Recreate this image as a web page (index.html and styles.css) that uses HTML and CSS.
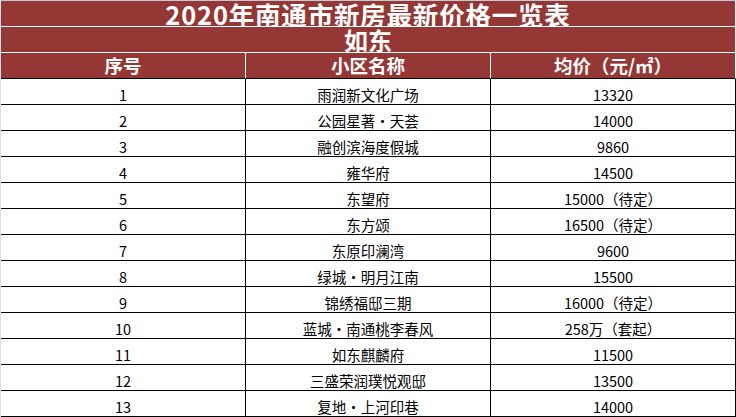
FILE: index.html
```html
<!DOCTYPE html>
<html lang="zh">
<head>
<meta charset="utf-8">
<title>2020年南通市新房最新价格一览表</title>
<link rel="stylesheet" href="styles.css">
</head>
<body>
<div class="sheet">
  <div class="title">2020年南通市新房最新价格一览表</div>
  <div class="subtitle">如东</div>
  <div class="grid">
    <div class="th">序号</div>
    <div class="th">小区名称</div>
    <div class="th">均价（元/㎡）</div>

    <div class="td">1</div><div class="td">雨润新文化广场</div><div class="td">13320</div>
    <div class="td">2</div><div class="td">公园星著・天荟</div><div class="td">14000</div>
    <div class="td">3</div><div class="td">融创滨海度假城</div><div class="td">9860</div>
    <div class="td">4</div><div class="td">雍华府</div><div class="td">14500</div>
    <div class="td">5</div><div class="td">东望府</div><div class="td">15000（待定）</div>
    <div class="td">6</div><div class="td">东方颂</div><div class="td">16500（待定）</div>
    <div class="td">7</div><div class="td">东原印澜湾</div><div class="td">9600</div>
    <div class="td">8</div><div class="td">绿城・明月江南</div><div class="td">15500</div>
    <div class="td">9</div><div class="td">锦绣福邸三期</div><div class="td">16000（待定）</div>
    <div class="td">10</div><div class="td">蓝城・南通桃李春风</div><div class="td">258万（套起）</div>
    <div class="td">11</div><div class="td">如东麒麟府</div><div class="td">11500</div>
    <div class="td">12</div><div class="td">三盛荣润璞悦观邸</div><div class="td">13500</div>
    <div class="td">13</div><div class="td">复地・上河印巷</div><div class="td">14000</div>
  </div>
</div>
</body>
</html>
```
FILE: styles.css
```css
html, body {
  margin: 0;
  padding: 0;
  background: #ffffff;
}
body {
  width: 736px;
  height: 417px;
  overflow: hidden;
  font-family: "Noto Sans CJK SC", "Noto Sans", sans-serif;
}
.sheet {
  box-sizing: border-box;
  width: 736px;
  height: 417px;
  border-top: 1px solid #c4cad3;
  border-left: 1px solid #d7dfeb;
  display: flex;
  flex-direction: column;
}
.title, .subtitle {
  height: 25px;
  border-bottom: 1px solid #ffffff;
  border-right: 1px solid #f0f0f0;
  background: #953735;
  color: #ffffff;
  font-weight: bold;
  text-align: center;
  overflow: visible;
  white-space: nowrap;
}
.title {
  font-size: 25.5px;
  line-height: 25px;
  letter-spacing: 0.8px;
}
.subtitle {
  font-size: 24px;
  line-height: 25px;
}
.grid {
  display: grid;
  grid-template-columns: 245px 245px 245px;
  grid-auto-rows: 26px;
}
.th {
  box-sizing: border-box;
  background: #953735;
  color: #ffffff;
  font-weight: bold;
  font-size: 18.5px;
  line-height: 25px;
  text-align: center;
  border-right: 1px solid #ffffff;
  border-bottom: 1px solid #000000;
  white-space: nowrap;
}
.td {
  box-sizing: border-box;
  border-right: 1px solid #000000;
  border-bottom: 1px solid #000000;
  font-size: 14.5px;
  line-height: 18px;
  color: #000000;
  display: flex;
  align-items: flex-end;
  justify-content: center;
  white-space: nowrap;
}
```
